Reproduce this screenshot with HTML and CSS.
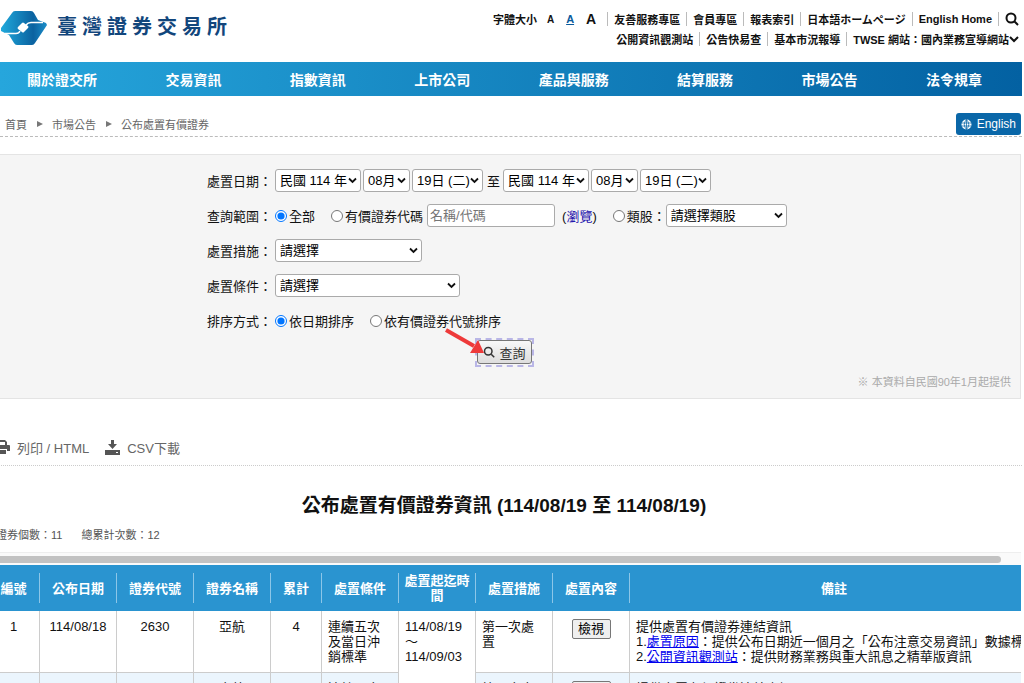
FILE: index.html
```html
<!DOCTYPE html>
<html lang="zh-Hant">
<head>
  <meta charset="UTF-8">
  <meta name="viewport" content="width=device-width, initial-scale=1.0">
  <title>公布處置有價證券 - 臺灣證券交易所</title>
  <link rel="stylesheet" href="styles.css">
</head>
<body>

  <!-- Header -->
  <header class="header">
    <a class="logo" href="#">
      <svg width="47" height="36" viewBox="0 0 47 36">
        <defs>
          <linearGradient id="logoFill" x1="0" y1="0" x2="1" y2="0">
            <stop offset="0" stop-color="#1fa9dc"/>
            <stop offset="0.7" stop-color="#0b62a0"/>
            <stop offset="1" stop-color="#1c8fca"/>
          </linearGradient>
        </defs>
        <path fill="url(#logoFill)" d="M1 17 L12 2 Q13 0 15 0 H31 Q33 0 34 2 L38 9 L46 12 L47 14 L35 32 Q34 34 32 34 H17 Q15 34 14 32 L9 24 L1 20 Z"/>
        <path fill="none" stroke="#fff" stroke-width="1.5" d="M5 22.5 H16 Q19 22.500 20 20 M26 14 Q28 11.500 31 11.500 H43"/>
        <path fill="#fff" d="M22 12 Q23 11 24 12 L28 15 Q29 16 28 17 L24 21 Q23 22 22 21 L18 18 Q17 17 18 16 Z"/>
      </svg>
      <span class="logo-text">臺灣證券交易所</span>
    </a>
    <div class="links">
      <div class="links-row">
        <span class="font-size">字體大小</span>
        <a class="size-s" href="#">A</a>
        <a class="size-m" href="#">A</a>
        <a class="size-l" href="#">A</a>
        <a class="item" href="#">友善服務專區</a>
        <a class="item" href="#">會員專區</a>
        <a class="item" href="#">報表索引</a>
        <a class="item" href="#">日本語ホームページ</a>
        <a class="item" href="#">English Home</a>
        <a class="item" href="#" aria-label="搜尋">
          <svg class="icon" width="14" height="14" viewBox="0 0 14 14"><circle cx="6" cy="6" r="4.5"/><path d="M9.5 9.5 L13 13"/></svg>
        </a>
      </div>
      <div class="links-row">
        <a href="#">公開資訊觀測站</a>
        <a class="item" href="#">公告快易查</a>
        <a class="item" href="#">基本市況報導</a>
        <a class="item" href="#">TWSE 網站：國內業務宣導網站<svg class="icon" width="10" height="8" viewBox="0 0 10 8"><path d="M1 2 L5 6 L9 2"/></svg></a>
      </div>
    </div>
  </header>

  <!-- Main menu -->
  <nav class="nav">
    <a href="#">關於證交所</a>
    <a href="#">交易資訊</a>
    <a href="#">指數資訊</a>
    <a href="#">上市公司</a>
    <a href="#">產品與服務</a>
    <a href="#">結算服務</a>
    <a href="#">市場公告</a>
    <a href="#">法令規章</a>
  </nav>

  <!-- Breadcrumb -->
  <div class="breadcrumb">
    <a href="#">首頁</a><i class="arrow"></i>
    <a href="#">市場公告</a><i class="arrow"></i>
    <span>公布處置有價證券</span>
    <a class="english" href="#">
      <svg width="11" height="11" viewBox="0 0 22 22"><circle cx="11" cy="11" r="10" fill="#fff"/><path d="M1 8H21M1 14H21M11 1V21M11 1Q2 11 11 21M11 1Q20 11 11 21" fill="none" stroke="#0a67a8" stroke-width="1.5"/></svg>
      English
    </a>
  </div>

  <!-- Search form -->
  <form class="search">
    <div class="row">
      <span class="label">處置日期：</span>
      <select class="year" aria-label="開始年"><option>民國 114 年</option></select>
      <select class="month" aria-label="開始月"><option>08月</option></select>
      <select class="day" aria-label="開始日"><option>19日 (二)</option></select>
      <span class="to">至</span>
      <select class="year" aria-label="結束年"><option>民國 114 年</option></select>
      <select class="month" aria-label="結束月"><option>08月</option></select>
      <select class="day" aria-label="結束日"><option>19日 (二)</option></select>
    </div>
    <div class="row">
      <span class="label">查詢範圍：</span>
      <label class="radio"><input type="radio" name="range" checked>全部</label>
      <label class="radio next"><input type="radio" name="range">有價證券代碼</label>
      <input class="code" type="text" placeholder="名稱/代碼" aria-label="有價證券代碼">
      <span class="browse">(<a href="#">瀏覽</a>)</span>
      <label class="radio next"><input type="radio" name="range">類股：</label>
      <select class="sector" aria-label="類股"><option>請選擇類股</option></select>
    </div>
    <div class="row">
      <label class="label" for="measure">處置措施：</label>
      <select class="measure" id="measure"><option>請選擇</option></select>
    </div>
    <div class="row">
      <label class="label" for="condition">處置條件：</label>
      <select class="condition" id="condition"><option>請選擇</option></select>
    </div>
    <div class="row">
      <span class="label">排序方式：</span>
      <label class="radio"><input type="radio" name="sort" checked>依日期排序</label>
      <label class="radio next"><input type="radio" name="sort">依有價證券代號排序</label>
    </div>
    <div class="submit">
      <button type="button">
        <svg class="icon" width="12" height="12" viewBox="0 0 16 16"><circle cx="7" cy="7" r="5"/><path d="M11 11 L15 15"/></svg>查詢
      </button>
      <svg class="pointer" width="42" height="30" viewBox="0 0 42 30"><path d="M2 2 L30 18" stroke="#ee3a3a" stroke-width="4"/><path d="M34 12 L40 25 L26 25 Z" fill="#ee3a3a"/></svg>
    </div>
    <p class="note">※ 本資料自民國90年1月起提供</p>
  </form>

  <!-- Print and download -->
  <div class="tools">
    <a href="#">
      <svg width="16" height="14" viewBox="0 0 16 14" fill="#555"><path d="M3 0H11L13 2V5H11V2H5V5H3Z"/><path d="M1 5H15Q16 5 16 6V11H13V9H3V11H0V6Q0 5 1 5Z"/><path d="M4 10H12V14H4Z"/></svg>
      列印 / HTML</a>
    <a href="#">
      <svg width="15" height="15" viewBox="0 0 15 15" fill="#555"><path d="M6 0H9V4H12L7.5 9L3 4H6Z"/><path d="M0 10H15V15H0ZM11 12V13H13V12Z" fill-rule="evenodd"/></svg>
      CSV下載</a>
  </div>

  <h2>公布處置有價證券資訊 (114/08/19 至 114/08/19)</h2>
  <p class="count"><span>證券個數：11</span><span>總累計次數：12</span></p>

  <!-- Result table -->
  <div class="result">
    <div class="scrollbar"><div class="thumb"></div></div>
    <table>
      <colgroup>
        <col class="c-no"><col class="c-text"><col class="c-text"><col class="c-text"><col class="c-sum">
        <col class="c-text"><col class="c-text"><col class="c-text"><col class="c-text"><col class="c-memo">
      </colgroup>
      <thead>
        <tr>
          <th><span>編號</span></th>
          <th><span>公布日期</span></th>
          <th><span>證券代號</span></th>
          <th><span>證券名稱</span></th>
          <th><span>累計</span></th>
          <th><span>處置條件</span></th>
          <th><span>處置起迄時間</span></th>
          <th><span>處置措施</span></th>
          <th><span>處置內容</span></th>
          <th><span>備註</span></th>
        </tr>
      </thead>
      <tbody>
        <tr>
          <td class="center">1</td>
          <td class="center">114/08/18</td>
          <td class="center">2630</td>
          <td class="center">亞航</td>
          <td class="center">4</td>
          <td>連續五次及當日沖銷標準</td>
          <td class="blank">114/08/19～114/09/03</td>
          <td>第一次處置</td>
          <td class="center"><button type="button">檢視</button></td>
          <td class="memo">提供處置有價證券連結資訊<br>1.<a href="#">處置原因</a>：提供公布日期近一個月之「公布注意交易資訊」數據標準<br>2.<a href="#">公開資訊觀測站</a>：提供財務業務與重大訊息之精華版資訊</td>
        </tr>
        <tr>
          <td></td>
          <td></td>
          <td></td>
          <td class="center">立航</td>
          <td></td>
          <td>連續五次</td>
          <td class="blank"></td>
          <td>第一次處置</td>
          <td class="center"><button type="button">檢視</button></td>
          <td class="memo">提供處置有價證券連結資訊</td>
        </tr>
      </tbody>
    </table>
  </div>

</body>
</html>
```
FILE: styles.css
```css
* {
  box-sizing: border-box;
}
body {
  margin: 0;
  height: 100vh;
  padding-right: 2px;
  overflow: hidden;
  background-color: #fff;
  color: #111;
  font-family: "Liberation Sans", "Noto Sans CJK TC", sans-serif;
  font-size: 13px;
}
a {
  color: inherit;
  text-decoration: none;
}
.icon {
  fill: none;
  stroke: currentColor;
  stroke-width: 2;
}

/* Header */
.header {
  display: flex;
  justify-content: space-between;
  height: 62px;
}
.logo {
  display: flex;
  align-items: flex-start;
  padding-top: 11px;
}
.logo-text {
  margin-left: 10px;
  line-height: 32px;
  font-size: 20px;
  font-weight: bold;
  letter-spacing: 5px;
  color: #12467c;
}
.links {
  padding-top: 9px;
  font-size: 11px;
  font-weight: bold;
}
.links-row {
  display: flex;
  justify-content: flex-end;
  align-items: center;
  height: 20px;
  padding-right: 3px;
  white-space: nowrap;
}
.links-row .item {
  display: flex;
  align-items: center;
  height: 14px;
  margin-left: 6px;
  padding-left: 6px;
  border-left: 1px solid #bbb;
}
.size-s {
  margin-left: 10px;
  font-size: 10px;
}
.size-m {
  margin-left: 12px;
  color: #0a5a9c;
  text-decoration: underline;
}
.size-l {
  margin: 0 5px 0 12px;
  font-size: 14px;
}

/* Main menu */
.nav {
  display: flex;
  justify-content: space-between;
  align-items: center;
  height: 34px;
  padding: 0 40px 0 27px;
  background: linear-gradient(to right, #26a6dc, #0361a2);
  color: #fff;
  font-size: 14px;
  font-weight: bold;
}

/* Breadcrumb */
.breadcrumb {
  display: flex;
  align-items: center;
  height: 41px;
  padding: 16px 0 0 5px;
  border-bottom: 1px dashed #bbb;
  color: #666;
  font-size: 11px;
}
.arrow {
  margin: 0 9px 0 10px;
  border-left: 6px solid #777;
  border-top: 3px solid transparent;
  border-bottom: 3px solid transparent;
}
.english {
  display: flex;
  align-items: center;
  gap: 5px;
  height: 22px;
  margin: 0 1px 0 auto;
  padding: 0 5px;
  border-radius: 3px;
  background-color: #0a67a8;
  color: #fff;
  font-size: 12px;
}

/* Search form */
.search {
  height: 245px;
  margin: 17px 1px 0 0;
  padding: 8px 9px 0 207px;
  border: 1px solid #e4e4e4;
  border-left: none;
  background-color: #f5f5f5;
}
.row {
  display: flex;
  align-items: center;
  height: 35px;
  white-space: nowrap;
}
.label {
  width: 68px;
}
.search select,
.code {
  height: 23px;
  margin: 0 2px 0 0;
  padding: 0 4px;
  border: 1px solid #aaa;
  border-radius: 3px;
  background-color: #fff;
  color: #000;
  font-family: inherit;
  font-size: 13px;
}
/* Own arrow, the built-in one takes too much room */
.search select {
  appearance: none;
  background-image: url("data:image/svg+xml,%3Csvg xmlns='http://www.w3.org/2000/svg' width='9' height='7' viewBox='0 0 9 7'%3E%3Cpath d='M1 1.500 L4.500 5 L8 1.500' fill='none' stroke='%23111' stroke-width='1.800'/%3E%3C/svg%3E");
  background-repeat: no-repeat;
  background-position: right 3px center;
}
.search .year {
  width: 86px;
}
.search .month {
  width: 47px;
}
.search .day {
  width: 71px;
}
.to {
  margin: 0 3px 0 2px;
}
.search .sector {
  width: 121px;
}
.search .measure {
  width: 147px;
}
.search .condition {
  width: 185px;
}
.code {
  width: 128px;
  margin-left: 4px;
  padding: 0 2px;
}
.radio {
  display: flex;
  align-items: center;
}
.radio input {
  width: 12px;
  height: 12px;
  margin: 0 2px 0 0;
}
.next {
  margin-left: 16px;
}
.browse {
  margin-left: 5px;
}
.browse a {
  color: #1a0dab;
}
.submit {
  position: relative;
  width: 55px;
  height: 25px;
  margin: 2px 0 0 270px;
  outline: 2px dashed #b9b6e6;
}
.submit button {
  display: flex;
  justify-content: center;
  align-items: center;
  gap: 4px;
  width: 100%;
  height: 24px;
  padding: 0;
  border: 1px solid #777;
  border-radius: 3px;
  background: linear-gradient(#f8f8f8, #ddd);
  color: #333;
  font-family: inherit;
  font-size: 13px;
}
.pointer {
  position: absolute;
  left: -33px;
  top: -12px;
}
.note {
  margin: 8px 0 0;
  color: #aaa;
  font-size: 11px;
  line-height: 18px;
  text-align: right;
}

/* Print and download */
.tools {
  display: flex;
  gap: 16px;
  height: 67px;
  margin-left: -6px;
  padding-top: 38px;
  border-bottom: 1px dotted #ccc;
  color: #666;
}
.tools a {
  display: flex;
  align-items: center;
  gap: 7px;
  height: 20px;
}

h2 {
  margin: 28px 0 0;
  padding-right: 14px;
  font-size: 19px;
  line-height: 24px;
  text-align: center;
}
.count {
  display: flex;
  gap: 19px;
  margin: 9px 0 0 -4px;
  color: #555;
  font-size: 11px;
  line-height: 16px;
}

/* Result table */
.result {
  margin: 9px 1px 0 0;
  overflow: hidden;
}
.scrollbar {
  height: 13px;
  padding-top: 3px;
  border-top: 1px solid #eee;
  background-color: #fafafa;
}
.thumb {
  width: 98%;
  height: 7px;
  border-radius: 0 4px 4px 0;
  background-color: #c2c2c2;
}
table {
  width: calc(100% + 29px);
  margin-left: -12px;
  border-spacing: 0;
  table-layout: fixed;
  line-height: 15px;
}
.c-no {
  width: 52px;
}
.c-text {
  width: 77px;
}
.c-sum {
  width: 51px;
}
th {
  height: 46px;
  padding: 0;
  background-color: #2a94d0;
  color: #fff;
}
th span {
  display: flex;
  justify-content: center;
  align-items: center;
  height: 30px;
  padding: 0 5px;
  border-right: 1px solid #8cc6e8;
}
th:last-child span {
  border-right: none;
}
td {
  height: 62px;
  padding: 8px 6px 0;
  border-right: 1px solid #ccc;
  border-bottom: 1px solid #ccc;
  vertical-align: top;
}
td.center {
  padding: 8px 0 0;
  text-align: center;
}
.memo {
  white-space: nowrap;
}
.memo a {
  color: #00e;
  text-decoration: underline;
}
td button {
  width: 39px;
  height: 20px;
  padding: 0;
  border: 1px solid #777;
  border-radius: 2px;
  background-color: #efefef;
  color: #000;
  font-family: inherit;
  font-size: 13px;
  line-height: 16px;
}
tr:nth-child(2) td {
  background-color: #ebf5fd;
}
td.blank,
tr:nth-child(2) td.blank {
  border-bottom: none;
  background-color: #fff;
}
```
